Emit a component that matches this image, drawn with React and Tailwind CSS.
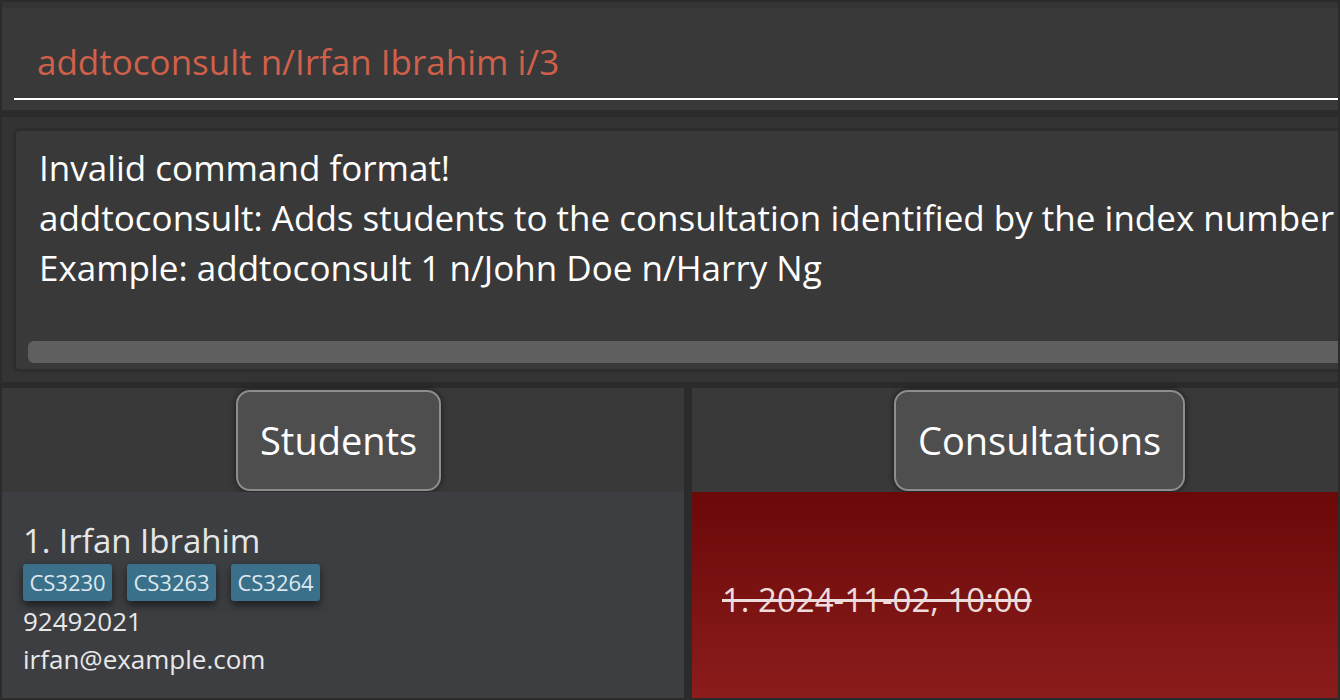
export default function App() {
  const tags = ["CS3230", "CS3263", "CS3264"];

  return (
    <div className="w-[1340px] h-[700px] overflow-hidden bg-[#2b2b2b] p-[2px] flex flex-col font-['Open_Sans',sans-serif]">
      {/* command box */}
      <div className="bg-[#333333] pt-[6px]">
        <div className="bg-[#393939] h-[102px] pl-[12px] flex flex-col">
          <div className="flex-1 pl-[23px] pt-[30px] text-[35px] leading-[48px] text-[#d0604a]">
            addtoconsult n/Irfan Ibrahim i/3
          </div>
          <div className="h-[2px] bg-white mb-[10px]" />
        </div>
      </div>

      <div className="h-[7px] bg-[#2b2b2b]" />

      {/* result display */}
      <div className="bg-[#333333] pt-[11px] pb-[10px] pl-[11px]">
        <div className="h-[244px] rounded-l-[6px] border-[3px] border-r-0 border-[#2d2d2d] bg-[#393939] flex flex-col">
          <div className="flex-1 pl-[23px] pt-[12px] text-[35px] leading-[50px] text-white whitespace-nowrap">
            <div>Invalid command format!</div>
            <div>addtoconsult: Adds students to the consultation identified by the index number</div>
            <div>Example: addtoconsult 1 n/John Doe n/Harry Ng</div>
          </div>
          <div className="h-[22px] ml-[12px] mb-[6px] rounded-l-[6px] bg-[#5f5f5f]" />
        </div>
      </div>

      <div className="h-[6px] bg-[#2b2b2b]" />

      {/* panels */}
      <div className="flex-1 flex">
        <div className="w-[682px] flex flex-col">
          <div className="h-[104px] bg-[#393939] flex items-center pl-[234px]">
            <div className="h-[101px] px-[22px] flex items-center rounded-[14px] border-2 border-[#8d8d8d] bg-[#4e4e4e] shadow-[0_0_6px_rgba(0,0,0,0.6)] text-[38px] text-white">
              Students
            </div>
          </div>
          <div className="flex-1 bg-[#3c3e42] pl-[21px] pt-[29px]">
            <div className="text-[33px] leading-[40px] text-[#e6e6e6]">1. Irfan Ibrahim</div>
            <div className="flex gap-[15px] mt-[3px]">
              {tags.map((t) => (
                <div
                  key={t}
                  className="w-[89px] h-[37px] rounded-[3px] bg-[#3a7089] text-[22px] text-[#dde8ef] flex items-center justify-center shadow-[0_4px_8px_rgba(0,0,0,0.55)]"
                >
                  {t}
                </div>
              ))}
            </div>
            <div className="text-[26px] leading-[38px] text-[#e8e8e8] mt-[1px]">92492021</div>
            <div className="text-[26px] leading-[38px] text-[#e8e8e8]">irfan@example.com</div>
          </div>
        </div>
        <div className="w-[8px] bg-[#2b2b2b]" />
        <div className="flex-1 flex flex-col">
          <div className="h-[104px] bg-[#393939] flex items-center pl-[202px]">
            <div className="h-[101px] px-[22px] flex items-center rounded-[14px] border-2 border-[#8d8d8d] bg-[#4e4e4e] shadow-[0_0_6px_rgba(0,0,0,0.6)] text-[38px] text-white">
              Consultations
            </div>
          </div>
          <div className="flex-1 bg-gradient-to-b from-[#6b0808] to-[#8b1c1c] flex items-center pl-[30px] pt-[10px]">
            <span className="text-[33px] text-[#eedcdc] line-through">1. 2024-11-02, 10:00</span>
          </div>
        </div>
      </div>
    </div>
  );
}
